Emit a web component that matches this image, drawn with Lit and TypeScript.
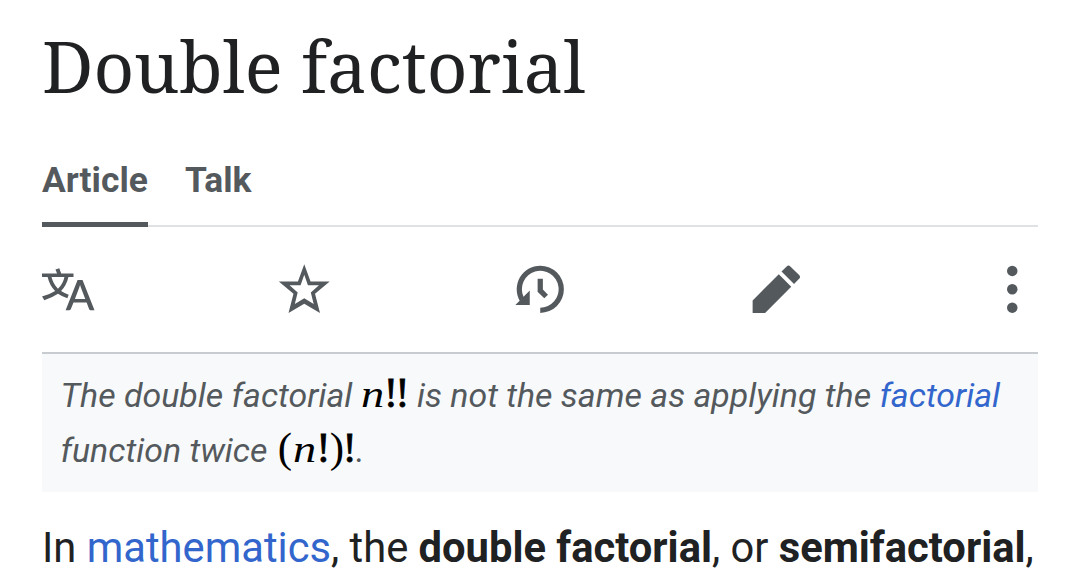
import { LitElement, html, css, svg } from "lit"
import { customElement, property } from "lit/decorators.js"

const ICONS = {
  language: svg`<path d="M20 18h-1.44a.6.6 0 0 1-.4-.12.8.8 0 0 1-.23-.31L17 15h-5l-1 2.54a.8.8 0 0 1-.22.3.6.6 0 0 1-.4.14H9l4.55-11.47h1.89zm-3.53-4.31L14.89 9.5a12 12 0 0 1-.39-1.24q-.09.37-.19.69l-.19.56-1.58 4.19zm-6.3-1.58a13.4 13.4 0 0 1-2.91-1.41 11.46 11.46 0 0 0 2.81-5.37H12V4H7.31a4 4 0 0 0-.2-.56C6.87 2.79 6.6 2 6.6 2l-1.47.5s.4.89.6 1.5H0v1.33h2.15A11.23 11.23 0 0 0 5 10.7a17.2 17.2 0 0 1-5 2.1q.56.82.87 1.38a23.3 23.3 0 0 0 5.22-2.51 15.6 15.6 0 0 0 3.56 1.77zM3.63 5.33h4.91a8.1 8.1 0 0 1-2.45 4.45 9.1 9.1 0 0 1-2.46-4.45"/>`,
  star: svg`<path fill-rule="evenodd" d="M10 .5l2.4 6.5h7.3l-5.6 4.75 1.9 7.3-6-3.55-6 3.55 1.9-7.3L.3 7h7.3zM10 4.5L8.6 8.5H4.4l3.1 2.7-1.1 4.4L10 13.4l3.6 2.2-1.1-4.4 3.1-2.7h-4.2z"/>`,
  history: svg`<path d="M9 6v5h.06l2.48 2.47 1.41-1.41L11 10.11V6z"/><path d="M10 1a9 9 0 0 0-7.85 13.35L.5 16H6v-5.5l-2.38 2.38A7 7 0 1 1 10 17v2a9 9 0 0 0 0-18"/>`,
  edit: svg`<path d="m16.77 8 1.94-2a1 1 0 0 0 0-1.41l-3.34-3.3a1 1 0 0 0-1.41 0L12 3.23zM1 14.25V19h4.75l9.96-9.96-4.75-4.75z"/>`,
  more: svg`<circle cx="10" cy="3" r="2"/><circle cx="10" cy="10" r="2"/><circle cx="10" cy="17" r="2"/>`,
}

/**
 * wiki-icon - toolbar icon on a 20 unit grid
 */
@customElement("wiki-icon")
export class WikiIcon extends LitElement {
  static styles = css`
    :host {
      display: block;
      width: 52.5px;
      height: 52.5px;
    }

    svg {
      display: block;
      width: 100%;
      height: 100%;
      fill: #54595d;
    }
  `

  @property()
  name: keyof typeof ICONS = "more"

  render() {
    return html`<svg viewBox="0 0 20 20">${ICONS[this.name]}</svg>`
  }
}

@customElement("app-root")
export class AppRoot extends LitElement {
  static styles = css`
    :host {
      display: block;
      box-sizing: border-box;
      height: 581px;
      padding: 0 42px;
      overflow: hidden;
      background: #fff;
      color: #202122;
      font-family: Roboto, sans-serif;
      white-space: nowrap;
    }

    .title {
      margin: 0;
      padding-top: 21px;
      height: 91px;
      font: 400 70.8px/90px "Noto Serif", "DejaVu Serif Condensed", serif;
    }

    .tabs {
      display: flex;
      gap: 37px;
      box-sizing: border-box;
      height: 77px;
      margin-top: 38px;
      border-bottom: 2px solid #dfe1e4;
      color: #54595d;
      font-size: 35.4px;
      font-weight: 700;
      line-height: 61px;
    }

    .tab {
      box-sizing: border-box;
      height: 77px;
    }

    .tab.active {
      border-bottom: 5px solid #54595d;
    }

    .toolbar {
      display: flex;
      justify-content: space-between;
      height: 89px;
      padding-top: 36px;
    }

    .hatnote {
      box-sizing: border-box;
      height: 140px;
      padding: 14px 18.5px;
      border-top: 2px solid #c8ccd1;
      background: #f8f9fa;
      color: #54595d;
      font-size: 33.9px;
      font-style: italic;
      line-height: 55px;
    }

    .line {
      height: 55px;
    }

    .math {
      margin-right: 2px;
      color: #000;
      font-family: "Liberation Serif", serif;
      font-size: 43px;
      font-style: normal;
      line-height: 1px;
    }

    .math i {
      display: inline-block;
      width: 23px;
      font-size: 38px;
      transform: scaleX(1.22);
      transform-origin: left;
    }

    .bang {
      letter-spacing: -2.8px;
      -webkit-text-stroke: 0.8px #000;
    }

    .open {
      margin: 0 1px 0 2px;
    }

    .close {
      margin: 0 -1.5px 0 2px;
    }

    .link {
      color: #3366cc;
    }

    .lead {
      margin: 24px 0 0;
      font-size: 41.7px;
      line-height: 64px;
    }
  `

  render() {
    return html`
      <h1 class="title">Double factorial</h1>
      <nav class="tabs">
        <span class="tab active">Article</span>
        <span class="tab">Talk</span>
      </nav>
      <div class="toolbar">
        <wiki-icon name="language"></wiki-icon>
        <wiki-icon name="star"></wiki-icon>
        <wiki-icon name="history"></wiki-icon>
        <wiki-icon name="edit"></wiki-icon>
        <wiki-icon name="more"></wiki-icon>
      </div>
      <div class="hatnote">
        <div class="line">
          The double factorial
          <span class="math"><i>n</i><span class="bang">!!</span></span>
          is not the same as applying the <span class="link">factorial</span>
        </div>
        <div class="line">
          function twice
          <span class="math"
            ><span class="open">(</span><i>n</i><span class="bang">!</span
            ><span class="close">)</span><span class="bang">!</span></span
          >.
        </div>
      </div>
      <p class="lead">
        In <span class="link">mathematics</span>, the <b>double factorial</b>,
        or <b>semifactorial</b>,
      </p>
    `
  }
}
